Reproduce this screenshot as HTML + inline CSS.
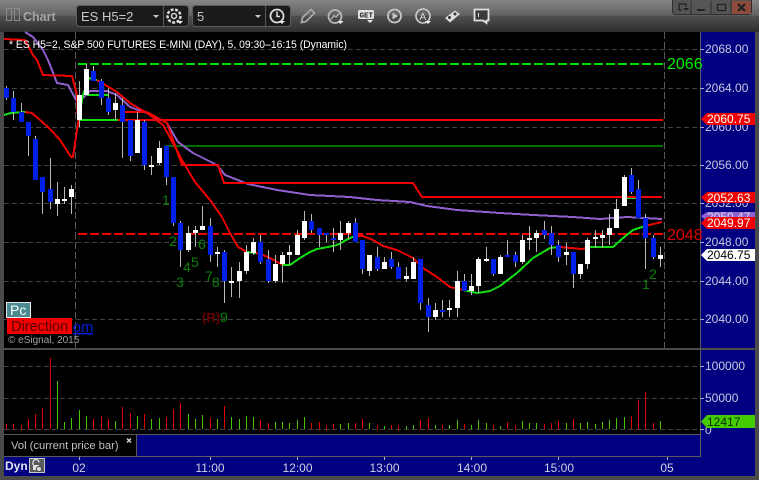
<!DOCTYPE html>
<html><head><meta charset="utf-8"><style>
html,body{margin:0;padding:0;background:#4a4a4a;width:759px;height:480px;overflow:hidden}
svg{display:block;font-family:"Liberation Sans",sans-serif}
</style></head><body>
<svg width="759" height="480" viewBox="0 0 759 480" xmlns="http://www.w3.org/2000/svg">
<defs><linearGradient id="tb" x1="0" y1="0" x2="0" y2="1"><stop offset="0" stop-color="#858585"/><stop offset=".48" stop-color="#626262"/><stop offset=".5" stop-color="#505050"/><stop offset="1" stop-color="#2e2e2e"/></linearGradient></defs>
<rect width="759" height="480" fill="#4a4a4a"/>
<rect width="759" height="32" fill="url(#tb)"/>
<!-- toolbar -->
<g fill="none" stroke="#8c8c8c" stroke-width="1"><rect x="6.500" y="8.500" width="5" height="12"/><rect x="14.500" y="8.500" width="5" height="12"/></g>
<text x="23" y="21" font-size="12.500" font-weight="bold" fill="#a4a4a4">Chart</text>
<rect x="76.500" y="5.500" width="112" height="21" rx="3" fill="#1a1a1a" stroke="#5c5c5c"/>
<rect x="192.500" y="5.500" width="98" height="21" rx="3" fill="#1a1a1a" stroke="#5c5c5c"/>
<path d="M163.500 6V26M265.500 6V26" stroke="#5c5c5c"/>
<text x="81" y="21" font-size="13" fill="#c8c8c8">ES H5=2</text>
<text x="197" y="21" font-size="13" fill="#c8c8c8">5</text>
<path d="M153 15h6l-3 3zM255 15h6l-3 3z" fill="#c8c8c8"/>
<!-- gear -->
<circle cx="174" cy="16" r="6.500" fill="none" stroke="#d8d8d8" stroke-width="2.500" stroke-dasharray="3 1.500"/><circle cx="174" cy="16" r="2.500" fill="none" stroke="#d8d8d8" stroke-width="1.500"/><path d="M177 21h6l-3 3z" fill="#eee"/>
<!-- clock -->
<circle cx="277" cy="16" r="6.500" fill="none" stroke="#ddd" stroke-width="1.800"/><path d="M277 11.500V16.500H280" fill="none" stroke="#ddd" stroke-width="1.500"/><path d="M279 21h6l-3 3z" fill="#eee"/>
<!-- pencil -->
<path d="M301.500 22.500L302.500 17.500L311 9.500L314.500 13L306 21.500Z" fill="none" stroke="#a8a8a8" stroke-width="1.800"/>
<!-- chart circle -->
<circle cx="335" cy="16.500" r="6.500" fill="none" stroke="#b8b8b8" stroke-width="1.800"/><path d="M331 19.500L334 15.500L336 17L340 12.500" fill="none" stroke="#b8b8b8" stroke-width="1.300"/><path d="M337.500 21h6l-3 3z" fill="#eee"/>
<!-- GET -->
<rect x="358" y="10" width="16" height="9" rx="1.500" fill="#e4e4e4"/><text x="359.500" y="17.500" font-size="7.500" font-weight="bold" font-family="Liberation Mono" fill="#222">GET</text><path d="M367 20h6l-3 3z" fill="#eee"/>
<!-- play -->
<circle cx="394.500" cy="16" r="6.500" fill="none" stroke="#c8c8c8" stroke-width="1.800"/><path d="M392.500 12.500L398 16L392.500 19.500Z" fill="#c8c8c8"/>
<!-- A -->
<circle cx="423" cy="16" r="7" fill="none" stroke="#d0d0d0" stroke-width="1.600"/><text x="419.500" y="20" font-size="10" fill="#d8d8d8">A</text><path d="M425 21h6l-3 3z" fill="#eee"/>
<!-- tag -->
<path d="M445 18L455 10.500L460 14L450 22.500Z" fill="#dcdcdc"/><circle cx="449.500" cy="17.500" r="1.500" fill="#333"/><circle cx="455" cy="14" r="1.500" fill="#333"/>
<!-- speech -->
<path d="M474.500 9.500H488.500V20.500H486.500V23L483 20.500H474.500Z" fill="#3a3a3a" stroke="#e0e0e0" stroke-width="1.800"/><path d="M478.500 13v4" stroke="#e0e0e0"/>
<!-- window buttons -->
<rect x="672.500" y="-2" width="79" height="16.500" rx="3" fill="#555" stroke="#2e2e2e"/>
<path d="M691 1V14M711 1V14M731 1V14" stroke="#2e2e2e"/>
<rect x="732" y="1" width="19" height="13" fill="#8e4a3c"/>
<path d="M682 10H679V4H686V7" fill="none" stroke="#222" stroke-width="1.300"/><path d="M683 8h6l-3 3z" fill="#222"/>
<path d="M697 10h8" stroke="#222" stroke-width="2"/>
<rect x="717.500" y="4.500" width="8" height="6" fill="none" stroke="#222" stroke-width="1.300"/>
<path d="M738 4L745 11M745 4L738 11" stroke="#222" stroke-width="2.200"/>

<!-- panels -->
<rect x="4" y="32" width="696" height="316" fill="#000"/>
<rect x="4" y="350" width="696" height="84" fill="#000"/>
<rect x="700" y="32" width="55" height="444" fill="#000080"/>
<rect x="4" y="435" width="132" height="21" fill="#000"/>
<rect x="137" y="435" width="563" height="21" fill="#000080"/>
<rect x="4" y="457" width="751" height="19" fill="#000080"/>
<g shape-rendering="crispEdges">
<path d="M4 348.500H755M4 349.500H755" stroke="#4c4c4c"/>
<path d="M700.500 32V457M4 434.500H700M4 456.500H700M136.500 434V456" stroke="#5a5a5a"/>
<!-- grid -->
<path d="M4 49.500H700M4 88.500H700M4 127.500H700M4 165.500H700M4 203.500H700M4 242.500H700M4 281.500H700M4 319.500H700M4 366.500H700M4 398.500H700M4 429.500H700" stroke="#424242" stroke-dasharray="5 3"/>
<path d="M75.500 32V348M664.500 32V348" stroke="#5a5a5a" stroke-dasharray="7 3"/>
<path d="M700 49.500h4M700 88.500h4M700 127.500h4M700 165.500h4M700 203.500h4M700 242.500h4M700 281.500h4M700 319.500h4M700 366.500h4M700 398.500h4M700 429.500h4M79.500 457v3M210.500 457v3M297.500 457v3M384.500 457v3M471.500 457v3M558.500 457v3M667.500 457v3" stroke="#b0b0c8"/>
<!-- levels -->
<path d="M78 64H663" stroke="#00e000" stroke-width="2" stroke-dasharray="9 3"/>
<path d="M78 234H665" stroke="#f00000" stroke-width="2" stroke-dasharray="9 3"/>
<path d="M165 146H663" stroke="#007000" stroke-width="2"/>
<path d="M117 120H663" stroke="#f00000" stroke-width="2"/>
<path d="M77 120H118M87 95H108M627 198H638" stroke="#10e010" stroke-width="2" fill="none"/>
<!-- purple -->
<polyline fill="none" stroke="#9060d0" stroke-width="2" points="25,32 33,37 43,50 48,60 57,83 68,85 76,100 83,98 90,91 107,91 117,95 130,107 147,113 167,123 178,142 193,153 217,165 225,175 248,184 277,190 310,195 350,197 377,200 410,202 427,206 457,210 500,213 533,215 573,217 600,219 627,217 662,219"/>
<!-- red upper stair -->
<polyline fill="none" stroke="#f00000" stroke-width="2" points="4,39 25,40 33,55 37,60 43,75 72,76 77,95 78,120"/>
<polyline fill="none" stroke="#f00000" stroke-width="2" points="125,112 147,112 167,123 182,165 218,165 224,183 413,183 422,197 662,197"/>
<!-- ema -->
<polyline fill="none" stroke="#10e010" stroke-width="2" points="4,115 11,113 25,112"/>
<polyline fill="none" stroke="#f00000" stroke-width="2" points="25,112 32,113 40,120 50,129 60,140 71,157 73,157 79,117"/>
<polyline fill="none" stroke="#10e010" stroke-width="2" points="79,117 83,95 89,78 97,80"/>
<polyline fill="none" stroke="#f00000" stroke-width="2" points="97,80 117,92 130,103 147,113 163,125 173,143 182,160 195,182 210,200 222,217 230,233 238,247 247,252"/>
<polyline fill="none" stroke="#10e010" stroke-width="2" points="247,252 256,253"/>
<polyline fill="none" stroke="#f00000" stroke-width="2" points="256,253 263,255 270,258 283,265"/>
<polyline fill="none" stroke="#10e010" stroke-width="2" points="283,265 290,265 300,258 310,252 317,249 328,247 337,245 350,238 356,236"/>
<polyline fill="none" stroke="#f00000" stroke-width="2" points="356,236 363,236 373,240 383,246 397,250 413,258 423,268 437,277 450,287 463,290"/>
<polyline fill="none" stroke="#10e010" stroke-width="2" points="463,290 477,293 490,291 500,286 517,273 533,258 550,248 560,247"/>
<polyline fill="none" stroke="#f00000" stroke-width="2" points="560,247 582,249 590,247"/>
<polyline fill="none" stroke="#10e010" stroke-width="2" points="590,247 613,247 623,238 633,230 645,226"/>
<polyline fill="none" stroke="#f00000" stroke-width="2" points="645,226 662,222"/>
<!-- wicks -->
<path stroke="#b8b8b8" fill="none" d="M6.500 86V100M13.500 91V120M21.500 103V122M28.500 122V156M35.500 136V180M42.500 177V214M50.500 158V209M57.500 182V216M64.500 187V204M71.500 185V214M79.500 81V127M86.500 64V95M93.500 66V81M101.500 79V105M108.500 88V115M115.500 93V120M122.500 98V158M130.500 120V161M137.500 112V153M144.500 120V170M151.500 156V175M159.500 141V165M166.500 146V185M173.500 177V226M180.500 221V267M188.500 226V252M195.500 226V247M202.500 206V230M210.500 218V262M217.500 247V267M224.500 250V303M231.500 267V297M239.500 262V298M246.500 245V274M253.500 238V255M260.500 235V264M268.500 250V283M275.500 255V283M282.500 252V283M289.500 245V265M297.500 230V255M304.500 211V240M311.500 214V233M319.500 228V247M326.500 233V242M333.500 228V252M340.500 221V250M348.500 221V239M355.500 218V242M362.500 240V274M369.500 255V276M377.500 247V271M384.500 257V269M391.500 252V269M398.500 262V279M406.500 267V281M413.500 257V279M420.500 259V310M428.500 298V332M435.500 303V320M442.500 300V317M449.500 300V317M457.500 271V317M464.500 274V291M471.500 274V295M478.500 257V293M486.500 247V262M493.500 259V276M500.500 255V274M507.500 240V257M515.500 252V267M522.500 235V264M529.500 226V250M536.500 230V252M544.500 221V239M551.500 226V255M558.500 240V262M566.500 243V265M573.500 252V288M580.500 264V279M587.500 238V269M595.500 230V248M602.500 230V248M609.500 214V245M616.500 199V228M624.500 175V206M631.500 168V194M638.500 180V218M645.500 214V269M653.500 235V259M660.500 247V267"/>
<!-- blue bodies -->
<path stroke="#0020e8" stroke-width="5" fill="none" d="M6.500 88V98M13.500 98V112M21.500 112V122M28.500 122V136M35.500 139V180M42.500 177V192M50.500 189V202M93.500 71V81M101.500 81V98M108.500 98V112M122.500 105V122M130.500 120V156M144.500 122V165M166.500 146V177M173.500 177V223M180.500 223V250M210.500 226V255M224.500 252V281M260.500 242V262M268.500 259V281M311.500 221V230M319.500 228V235M326.500 233V235M333.500 238V240M355.500 223V242M362.500 240V269M377.500 257V269M391.500 259V267M398.500 267V279M420.500 259V303M428.500 305V317M442.500 310V312M464.500 281V291M493.500 259V274M507.500 255V257M515.500 255V262M544.500 230V235M551.500 233V245M558.500 245V257M573.500 252V274M631.500 175V192M638.500 189V218M645.500 218V238M653.500 238V257"/>
<!-- white bodies -->
<path stroke="#fff" stroke-width="5" fill="none" d="M57.500 199V204M64.500 199V201M71.500 189V197M79.500 95V120M86.500 69V95M115.500 103V110M137.500 120V153M151.500 165V167M159.500 148V163M188.500 233V250M195.500 230V233M202.500 226V230M217.500 252V254M231.500 281V283M239.500 271V281M246.500 252V271M253.500 242V253M275.500 264V281M282.500 255V264M289.500 252V255M297.500 235V255M304.500 221V238M340.500 233V240M348.500 223V233M369.500 255V271M384.500 262V269M406.500 276V279M413.500 262V279M435.500 310V317M449.500 308V310M457.500 281V308M471.500 286V291M478.500 259V286M486.500 259V261M500.500 257V274M522.500 240V262M529.500 238V240M536.500 233V238M566.500 252V255M580.500 264V274M587.500 240V264M595.500 237V239M602.500 235V238M609.500 228V235M616.500 209V228M624.500 177V206M660.500 255V259"/>
<!-- volume -->
<path stroke="#e00000" fill="none" d="M6.500 424V429M13.500 424V429M21.500 425V429M28.500 419V429M35.500 414V429M42.500 408V429M50.500 358V429M93.500 419V429M101.500 416V429M108.500 419V429M122.500 407V429M130.500 413V429M144.500 414V429M166.500 417V429M173.500 409V429M180.500 403V429M210.500 418V429M224.500 406V429M260.500 420V429M268.500 423V429M311.500 423V429M319.500 422V429M326.500 425V429M333.500 424V429M355.500 423V429M362.500 419V429M377.500 425V429M391.500 425V429M398.500 425V429M420.500 420V429M428.500 418V429M442.500 425V429M464.500 424V429M493.500 425V429M507.500 422V429M515.500 425V429M544.500 424V429M551.500 423V429M558.500 421V429M573.500 419V429M631.500 416V429M638.500 400V429M645.500 392V429M653.500 423V429"/>
<path stroke="#44c800" fill="none" d="M57.500 381V429M64.500 422V429M71.500 418V429M79.500 410V429M86.500 416V429M115.500 421V429M137.500 416V429M151.500 419V429M159.500 418V429M188.500 414V429M195.500 419V429M202.500 415V429M217.500 419V429M231.500 417V429M239.500 419V429M246.500 416V429M253.500 417V429M275.500 422V429M282.500 422V429M289.500 423V429M297.500 420V429M304.500 417V429M340.500 424V429M348.500 423V429M369.500 423V429M384.500 426V429M406.500 426V429M413.500 425V429M435.500 425V429M449.500 425V429M457.500 420V429M471.500 425V429M478.500 420V429M486.500 423V429M500.500 426V429M522.500 421V429M529.500 423V429M536.500 423V429M566.500 423V429M580.500 423V429M587.500 422V429M595.500 424V429M602.500 422V429M609.500 420V429M616.500 418V429M624.500 417V429M660.500 421V429"/>
</g>
<!-- title -->
<text x="9" y="48" font-size="11" fill="#fff" textLength="338" lengthAdjust="spacingAndGlyphs">* ES H5=2, S&amp;P 500 FUTURES E-MINI (DAY), 5, 09:30–16:15 (Dynamic)</text>
<!-- level labels -->
<text x="667" y="69" font-size="16" fill="#00f000">2066</text>
<text x="667" y="240" font-size="16" fill="#e00000">2048</text>
<!-- study numbers -->
<g font-size="14" fill="#0a800a">
<text x="162" y="205">1</text><text x="169" y="246">2</text><text x="176" y="287">3</text><text x="183" y="272">4</text><text x="191" y="267">5</text><text x="198" y="249">6</text><text x="205" y="281">7</text><text x="212" y="287">8</text><text x="220" y="322">9</text><text x="642" y="289">1</text><text x="649" y="279">2</text>
</g>
<text x="202" y="322" font-size="13" font-weight="bold" fill="#6a0000">(R)</text>
<!-- overlays left -->
<rect x="6.500" y="302.500" width="24" height="15" fill="#4a8a90" stroke="#e8e8e8"/>
<text x="10" y="315" font-size="14" fill="#fff">Pc</text>
<rect x="7" y="318" width="65" height="16" fill="#f00000"/>
<text x="11" y="331" font-size="14.500" fill="#5a0000">Direction</text>
<text x="73" y="332" font-size="14.500" fill="#0020e8" text-decoration="underline">om</text>
<text x="8" y="343" font-size="10" fill="#a0a0a0">© eSignal, 2015</text>
<!-- price axis -->
<g font-size="12" fill="#c8c8e0">
<text x="705" y="53">2068.00</text><text x="705" y="92">2064.00</text><text x="705" y="131">2060.00</text><text x="705" y="169">2056.00</text><text x="705" y="207">2052.00</text><text x="705" y="246">2048.00</text><text x="705" y="285">2044.00</text><text x="705" y="323">2040.00</text>
<text x="705" y="370">100000</text><text x="705" y="402">50000</text><text x="705" y="434">0</text>
</g>
<path d="M701 119L707 113H755V125H707Z" fill="#f00000"/><text x="707" y="123" font-size="12" fill="#fff">2060.75</text>
<path d="M701 197.500L707 192H755V203H707Z" fill="#f00000"/><text x="707" y="202" font-size="12" fill="#fff">2052.63</text>
<path d="M701 216L707 212H755V222H707Z" fill="#9060d0"/><text x="707" y="221" font-size="12" fill="#d8d8e8">2050.47</text>
<path d="M701 223L707 217H755V229H707Z" fill="#f00000"/><text x="707" y="227" font-size="12" fill="#fff">2049.97</text>
<path d="M701 255L707 249H755V261H707Z" fill="#fff"/><text x="707" y="259" font-size="12" fill="#000">2046.75</text>
<path d="M701 421.500L707 415H755V428H707Z" fill="#44cc00"/><text x="707" y="426" font-size="12" fill="#0a2a00">12417</text>
<!-- vol label -->
<text x="11" y="449" font-size="11.200" fill="#c0c0c0">Vol (current price bar)</text>
<path d="M127 438.500l4 4M131 438.500l-4 4" stroke="#d0d0d0" stroke-width="1.500"/>
<!-- time axis -->
<text x="5" y="470" font-size="12" font-weight="bold" fill="#e4e4f0">Dyn</text>
<rect x="29.500" y="458.500" width="15" height="14" fill="#5a5a5a" stroke="#c8c8c8"/>
<path d="M33 465V462.500a3 3 0 0 1 6 0" fill="none" stroke="#e0e0e0" stroke-width="1.300"/><rect x="33" y="465" width="6" height="5" fill="#e0e0e0"/><circle cx="39" cy="469" r="2.500" fill="#e0e0e0" stroke="#444"/>
<g font-size="12" fill="#d0d0e4" text-anchor="middle">
<text x="79" y="472">02</text><text x="210" y="472">11:00</text><text x="297.500" y="472">12:00</text><text x="384.500" y="472">13:00</text><text x="472" y="472">14:00</text><text x="559" y="472">15:00</text><text x="667" y="472">05</text>
</g>
</svg>
</body></html>
